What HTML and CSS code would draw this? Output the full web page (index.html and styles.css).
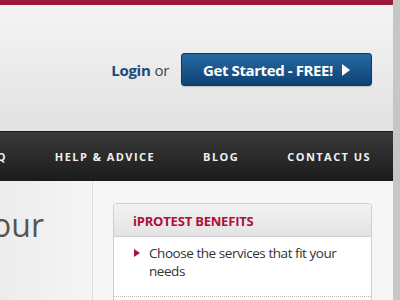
FILE: index.html
```html
<!DOCTYPE html>
<html>
<head>
<meta charset="utf-8">
<link rel="stylesheet" href="styles.css">
</head>
<body>
<div class="page">
  <div class="topbar"></div>
  <header class="header">
    <div class="actions">
      <a class="login">Login</a><span class="or">or</span>
      <a class="cta">Get Started - FREE!<svg class="cta-arrow" width="8" height="12" viewBox="0 0 8 12"><path d="M0 0 L8 6 L0 12 Z" fill="#fff"/></svg></a>
    </div>
  </header>
  <nav class="nav">
    <a class="nav-item">FAQ</a>
    <a class="nav-item">HELP &amp; ADVICE</a>
    <a class="nav-item">BLOG</a>
    <a class="nav-item">CONTACT US</a>
  </nav>
  <main class="main">
    <div class="left">
      <h1 class="hero-title">your</h1>
    </div>
    <div class="right">
      <section class="box">
        <h2 class="box-title">iPROTEST BENEFITS</h2>
        <ul class="box-list">
          <li class="box-item"><span class="bullet"></span><span>Choose the services that fit your needs</span></li>
        </ul>
      </section>
    </div>
  </main>
</div>
</body>
</html>
```
FILE: styles.css
```css
html, body { margin: 0; padding: 0; }
body {
  background: #c6c6c6;
  font-family: "Open Sans", "Liberation Sans", sans-serif;
  width: 400px; height: 300px; overflow: hidden;
}
.page { width: 393px; background: #f6f6f6; height: 300px; overflow: hidden; }
.topbar { height: 5px; background: #9d1a3a; }
.header {
  height: 126px;
  background: linear-gradient(#f4f4f4, #e2e2e2);
  display: flex; justify-content: flex-end; align-items: flex-start;
  padding: 48px 21px 0 0; box-sizing: border-box;
}
.actions { display: flex; align-items: center; }
.login { font-weight: 700; color: #1c4a78; font-size: 15px; letter-spacing: -0.3px; }
.or { color: #444; font-size: 15px; margin-left: 4px; margin-right: 12px; letter-spacing: -0.3px; }
.cta {
  width: 191px; height: 33px; box-sizing: border-box;
  display: flex; align-items: center; justify-content: center; gap: 9px;
  background: linear-gradient(#2669a3, #0f4275);
  border: 1px solid #0b3864; border-radius: 3px;
  color: #fff; font-weight: 700; font-size: 15px; letter-spacing: -0.4px;
  box-shadow: 0 1px 1px rgba(0,0,0,0.15);
}
.cta-arrow { display: block; }
.nav {
  height: 50px; box-sizing: border-box;
  border-top: 1px solid #1a1a1a;
  background: linear-gradient(#3a3a3a, #1b1b1b);
  display: flex; justify-content: flex-end; align-items: center; gap: 48px;
  padding-right: 22px; overflow: hidden; white-space: nowrap;
}
.nav-item { color: #f0f0f0; font-weight: 700; font-size: 11px; letter-spacing: 1.45px; flex-shrink: 0; }
.main { display: flex; height: 119px; }
.left {
  width: 92px; overflow: hidden; border-right: 1px solid #dcdcdc;
  background: linear-gradient(90deg, #ececec, #f5f5f5);
}
.hero-title {
  margin: 22px 0 0 -24px; font-weight: 400; font-size: 32px; color: #555; white-space: nowrap;
}
.right { flex: 1; padding: 22px 21px 0 20px; }
.box {
  border: 1px solid #cfcfcf; border-radius: 3px; background: #fff; min-height: 120px;
}
.box-title {
  margin: 0; height: 33px; box-sizing: border-box;
  background: linear-gradient(#f2f2f2, #e3e3e3);
  border-bottom: 1px solid #d2d2d2;
  padding: 8px 0 0 19px;
  color: #ae0f37; font-size: 13px; font-weight: 700; letter-spacing: -0.2px;
}
.box-list { list-style: none; margin: 0; padding: 0; }
.box-item {
  display: flex; gap: 9px; padding: 7px 10px 16px 20px;
  border-bottom: 1px dotted #bbb;
  color: #333; font-size: 13.5px; line-height: 18px; letter-spacing: -0.45px;
}
.bullet {
  flex-shrink: 0; width: 0; height: 0; margin-top: 5px;
  border-left: 6px solid #ae0f37; border-top: 4px solid transparent; border-bottom: 4px solid transparent;
}
```
